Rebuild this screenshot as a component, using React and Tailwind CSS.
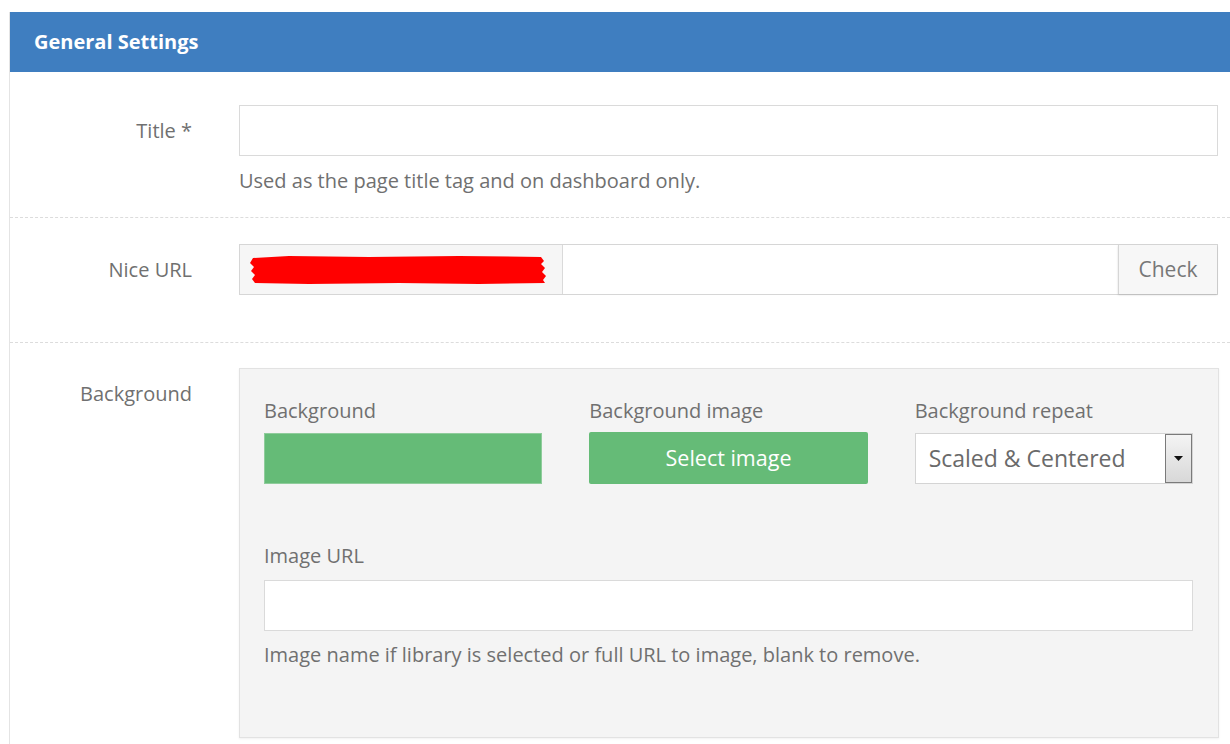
import { useState } from 'react';

const font = { fontFamily: '"Open Sans", "Noto Sans", sans-serif' };

function FieldLabel({ children }) {
  return (
    <div className="w-[182px] shrink-0 h-[51px] flex items-center justify-end text-[20px] text-[#707070]">
      {children}
    </div>
  );
}

// hand-scribbled redaction over the url prefix
function Redaction() {
  return (
    <svg width="300" height="30" viewBox="0 0 300 30" className="block">
      <path
        d="M4 3 L40 1 L120 2 L210 1 L292 2 L295 6 L292 9 L296 13 L293 17 L297 21 L294 25 L296 28 L230 29 L150 28 L60 29 L6 28 L3 24 L6 20 L2 16 L5 12 L1 8 Z"
        fill="#ff0000"
      />
    </svg>
  );
}

export default function App() {
  const [title, setTitle] = useState('');
  const [slug, setSlug] = useState('');
  const [imageUrl, setImageUrl] = useState('');
  const [repeat, setRepeat] = useState('scaled');

  return (
    <div className="w-full min-h-screen bg-white pt-3 pl-[9px] overflow-hidden" style={font}>
      <div className="border-l border-[#e4e4e4] min-h-[732px]">
        <div className="h-[60px] bg-[#3f7ec0] flex items-center pl-6 text-white font-bold text-[20px]">
          General Settings
        </div>

        {/* title */}
        <div className="flex pt-[33px] pb-[24px] border-b border-dashed border-[#dcdcdc]">
          <FieldLabel>Title *</FieldLabel>
          <div className="ml-[47px] w-[979px]">
            <input
              value={title}
              onChange={(e) => setTitle(e.target.value)}
              className="w-full h-[51px] border border-[#dadada] bg-white px-3 text-[20px] outline-none"
            />
            <p className="mt-[13px] text-[20px] leading-[24px] text-[#707070]">
              Used as the page title tag and on dashboard only.
            </p>
          </div>
        </div>

        {/* nice url */}
        <div className="flex pt-[26px] pb-[47px] border-b border-dashed border-[#dcdcdc]">
          <FieldLabel>Nice URL</FieldLabel>
          <div className="ml-[47px] w-[979px] h-[51px] flex border border-[#d6d6d6]">
            <div className="w-[323px] shrink-0 bg-[#f6f6f6] border-r border-[#dadada] flex items-center pl-[9px]">
              <Redaction />
            </div>
            <input
              value={slug}
              onChange={(e) => setSlug(e.target.value)}
              className="flex-1 min-w-0 bg-white px-3 text-[20px] outline-none"
            />
            <button className="w-[99px] shrink-0 bg-[#f7f7f7] border-l border-[#d6d6d6] shadow-[0_1px_2px_rgba(0,0,0,0.15)] text-[21px] text-[#777]">
              Check
            </button>
          </div>
        </div>

        {/* background */}
        <div className="flex pt-[25px]">
          <FieldLabel>Background</FieldLabel>
          <div className="ml-[47px] w-[980px] h-[370px] bg-[#f4f4f4] border border-[#e2e2e2] shadow-[0_1px_2px_rgba(0,0,0,0.06)] px-[24px] pt-[30px]">
            <div className="w-[929px] grid grid-cols-3 gap-x-[47px]">
              <div>
                <div className="h-[24px] mb-[10px] text-[20px] leading-[24px] text-[#707070]">Background</div>
                <div className="h-[51px] bg-[#65bb77] border border-[#8fcc9b]" />
              </div>
              <div>
                <div className="h-[24px] mb-[10px] text-[20px] leading-[24px] text-[#707070]">Background image</div>
                <button className="w-full h-[52px] -mt-px bg-[#65bb77] rounded-[2px] text-white text-[21.5px]">
                  Select image
                </button>
              </div>
              <div>
                <div className="h-[24px] mb-[10px] text-[20px] leading-[24px] text-[#707070]">Background repeat</div>
                <div className="relative h-[51px] bg-white border border-[#d4d4d4] flex items-center pl-[13px] text-[23px] text-[#6a6a6a]">
                  <select
                    value={repeat}
                    onChange={(e) => setRepeat(e.target.value)}
                    className="absolute inset-0 opacity-0 cursor-pointer"
                  >
                    <option value="scaled">Scaled &amp; Centered</option>
                    <option value="tile">Tiled</option>
                    <option value="none">No repeat</option>
                  </select>
                  <span>Scaled &amp; Centered</span>
                  <div className="absolute right-0 top-0 bottom-0 w-[27px] border border-[#7a7a7a] bg-gradient-to-b from-[#f4f4f4] to-[#d8d8d8] flex items-center justify-center pointer-events-none">
                    <svg width="9" height="5" viewBox="0 0 9 5">
                      <path d="M0 0 H9 L4.5 5 Z" fill="#111" />
                    </svg>
                  </div>
                </div>
              </div>
            </div>

            <div className="w-[929px] mt-[60px]">
              <div className="h-[24px] mb-[12px] text-[20px] leading-[24px] text-[#707070]">Image URL</div>
              <input
                value={imageUrl}
                onChange={(e) => setImageUrl(e.target.value)}
                className="w-full h-[51px] border border-[#dadada] bg-white px-3 text-[20px] outline-none"
              />
              <p className="mt-[12px] text-[20px] leading-[24px] text-[#707070]">
                Image name if library is selected or full URL to image, blank to remove.
              </p>
            </div>
          </div>
        </div>
      </div>
    </div>
  );
}
